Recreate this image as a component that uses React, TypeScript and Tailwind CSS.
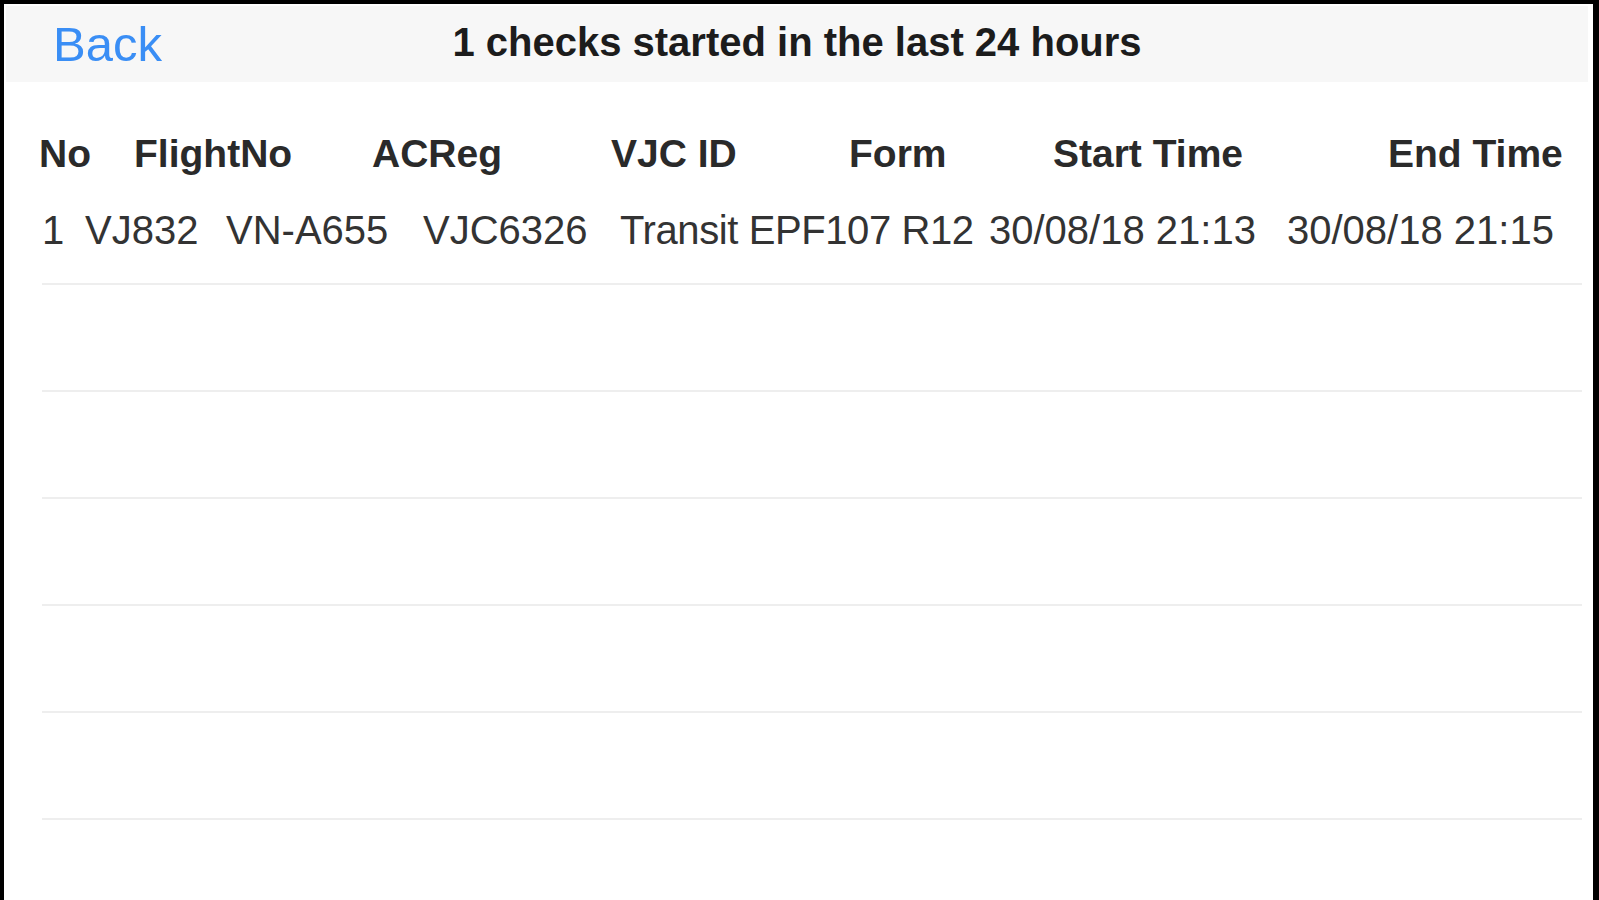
import React from "react";

type Check = {
  no: string;
  flightNo: string;
  acReg: string;
  vjcId: string;
  form: string;
  start: string;
  end: string;
};

const checks: Check[] = [
  {
    no: "1",
    flightNo: "VJ832",
    acReg: "VN-A655",
    vjcId: "VJC6326",
    form: "Transit EPF107 R12",
    start: "30/08/18 21:13",
    end: "30/08/18 21:15",
  },
];

const font = { fontFamily: '"Liberation Sans", Arial, Helvetica, sans-serif' };

export default function App() {
  const emptyRows = 5;

  return (
    <div
      className="h-screen w-screen overflow-hidden bg-black pl-[4px] pr-[6px] pt-[4px]"
      style={font}
    >
      <div className="h-full bg-white pl-[2px] pr-[5px] pt-[2px]">
        {/* nav bar */}
        <div className="grid h-[76px] grid-cols-[1fr_auto_1fr] items-center bg-[#f7f7f7]">
          <div className="pl-[47px]">
            <button
              type="button"
              className="text-[49px] leading-none text-[#3a8ef5]"
            >
              Back
            </button>
          </div>
          <h1 className="pb-[4px] text-[40px] font-bold leading-none text-[#1c1c1c]">
            1 checks started in the last 24 hours
          </h1>
          <div />
        </div>

        {/* table */}
        <div className="mt-[36px]">
          <div className="flex h-[70px] items-center pl-[33px] text-[39px] font-bold leading-none text-[#2a2a2a]">
            <span className="w-[95px]">No</span>
            <span className="w-[238px]">FlightNo</span>
            <span className="w-[239px]">ACReg</span>
            <span className="w-[238px]">VJC ID</span>
            <span className="w-[204px]">Form</span>
            <span className="w-[335px]">Start Time</span>
            <span>End Time</span>
          </div>

          {checks.map((c) => (
            <div
              key={c.no}
              className="ml-[36px] mr-[6px] flex h-[97px] items-center border-b-2 border-[#eeeeee] pb-[12px] text-[40px] leading-none text-[#333333]"
            >
              <span className="w-[43px]">{c.no}</span>
              <span className="w-[141px]">{c.flightNo}</span>
              <span className="w-[197px]">{c.acReg}</span>
              <span className="w-[197px]">{c.vjcId}</span>
              <span className="w-[369px] tracking-[-0.4px]">{c.form}</span>
              <span className="w-[298px]">{c.start}</span>
              <span>{c.end}</span>
            </div>
          ))}

          {Array.from({ length: emptyRows }).map((_, i) => (
            <div
              key={i}
              className="ml-[36px] mr-[6px] h-[107px] border-b-2 border-[#eeeeee]"
            />
          ))}
        </div>
      </div>
    </div>
  );
}
